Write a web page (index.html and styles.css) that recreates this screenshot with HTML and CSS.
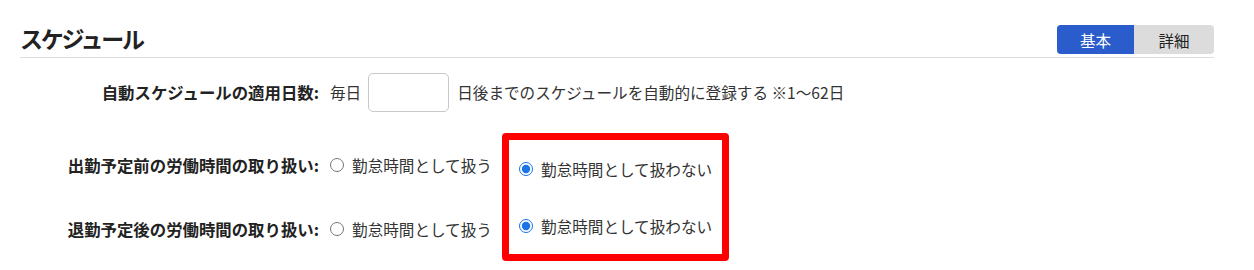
FILE: index.html
```html
<!DOCTYPE html>
<html lang="ja">
<head>
<meta charset="utf-8">
<link rel="stylesheet" href="styles.css">
</head>
<body>
<div class="panel">
  <div class="header">
    <h2 class="title">スケジュール</h2>
    <div class="toggle">
      <span class="toggle-btn active">基本</span>
      <span class="toggle-btn">詳細</span>
    </div>
  </div>
  <div class="form">
    <div class="row row-days">
      <div class="label">自動スケジュールの適用日数:</div>
      <div class="field">
        <span>毎日</span>
        <input class="num" type="text">
        <span>日後までのスケジュールを自動的に登録する ※1〜62日</span>
      </div>
    </div>
    <div class="radio-block">
      <div class="radio-rows">
        <div class="row">
          <div class="label">出勤予定前の労働時間の取り扱い:</div>
          <div class="field">
            <label class="opt"><input type="radio" name="a"> 勤怠時間として扱う</label>
          </div>
        </div>
        <div class="row">
          <div class="label">退勤予定後の労働時間の取り扱い:</div>
          <div class="field">
            <label class="opt"><input type="radio" name="b"> 勤怠時間として扱う</label>
          </div>
        </div>
      </div>
      <div class="highlight">
        <label class="opt"><input type="radio" name="a" checked> 勤怠時間として扱わない</label>
        <label class="opt"><input type="radio" name="b" checked> 勤怠時間として扱わない</label>
      </div>
    </div>
  </div>
</div>
</body>
</html>
```
FILE: styles.css
```css
* { box-sizing: border-box; }
body {
  margin: 0;
  background: #fff;
  font-family: "Noto Sans CJK JP", "Noto Sans", sans-serif;
  color: #333;
  font-size: 15.6px;
}
.panel {
  width: 1214px;
  padding: 25px 0 0 20px;
}
.header {
  display: flex;
  justify-content: space-between;
  align-items: flex-start;
  height: 33px;
  border-bottom: 1px solid #dcdcdc;
}
.title {
  margin: 0;
  font-size: 23px;
  font-weight: 700;
  color: #222;
  line-height: 26px;
  letter-spacing: -2.3px;
}
.toggle {
  display: flex;
  border-radius: 4px;
  overflow: hidden;
  background: #dcdcdc;
  height: 29px;
}
.toggle-btn {
  width: 77px;
  display: flex;
  align-items: center;
  justify-content: center;
  font-size: 15.5px;
  color: #222;
}
.toggle-btn.active {
  background: #2a5ccc;
  color: #fff;
}
.toggle-btn + .toggle-btn { width: 80px; }
.form {
  margin-left: -20px;
}
.row {
  display: flex;
  align-items: center;
}
.row-days {
  margin-top: 14px;
  height: 40px;
}
.label {
  width: 320px;
  flex: none;
  text-align: right;
  font-weight: 700;
  font-size: 16.4px;
  color: #222;
  padding-right: 1px;
  white-space: nowrap;
}
.field {
  display: flex;
  align-items: center;
  padding-left: 10px;
  gap: 7px;
  color: #333;
}
.num {
  width: 81px;
  height: 39px;
  border: 1px solid #c8c8c8;
  border-radius: 5px;
  margin: 0 1px 0 0;
  font: inherit;
}
.radio-block {
  display: flex;
  margin-top: 21px;
}
.radio-rows {
  display: flex;
  flex-direction: column;
  width: 502px;
  flex: none;
}
.radio-rows .row {
  height: 64px;
}
.opt {
  display: flex;
  align-items: center;
  gap: 8px;
  color: #333;
  white-space: nowrap;
}
.opt input {
  margin: 0;
  width: 14px;
  height: 14px;
  accent-color: #1a73e8;
}
.highlight {
  width: 227px;
  height: 128px;
  border: 7px solid #f00;
  border-radius: 4px;
  display: flex;
  flex-direction: column;
  justify-content: space-around;
  padding-left: 10px;
}
```
